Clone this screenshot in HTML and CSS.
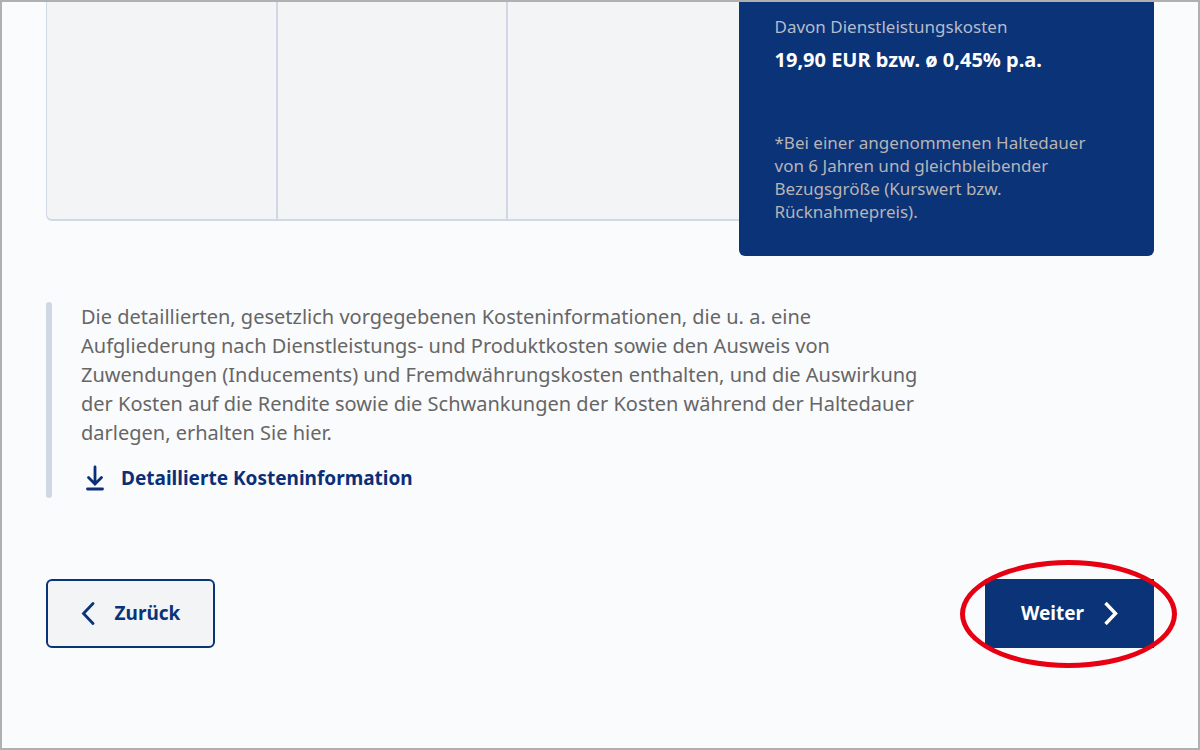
FILE: index.html
```html
<!DOCTYPE html>
<html lang="de">
    <head>
        <meta charset="utf-8">
        <title>Kosteninformation</title>
        <link rel="stylesheet" href="styles.css">
    </head>
    <body>
        <main class="page">
            <section class="costs">
                <div class="columns">
                    <div class="column"></div>
                    <div class="column"></div>
                    <div class="column"></div>
                </div>
                <div class="summary">
                    <p class="label">Davon Dienstleistungskosten</p>
                    <p class="value">19,90 EUR bzw. ø 0,45% p.a.</p>
                    <p class="note">*Bei einer angenommenen Haltedauer<br>von 6 Jahren und gleichbleibender<br>Bezugsgröße (Kurswert bzw.<br>Rücknahmepreis).</p>
                </div>
            </section>

            <section class="info">
                <p class="text">Die detaillierten, gesetzlich vorgegebenen Kosteninformationen, die u. a. eine<br>Aufgliederung nach Dienstleistungs- und Produktkosten sowie den Ausweis von<br>Zuwendungen (Inducements) und Fremdwährungskosten enthalten, und die Auswirkung<br>der Kosten auf die Rendite sowie die Schwankungen der Kosten während der Haltedauer<br>darlegen, erhalten Sie hier.</p>
                <a class="download" href="#">
                    <svg width="18" height="26" viewBox="0 0 18 26" fill="none" stroke="currentColor" stroke-linecap="round">
                        <path d="M9 2V19M2.5 12.5L9 19L15.5 12.5" stroke-width="2.8"/>
                        <path d="M1.5 24H16.5" stroke-width="2.8"/>
                    </svg>
                    Detaillierte Kosteninformation
                </a>
            </section>

            <nav class="actions">
                <button class="btn btn-back" type="button">
                    <svg width="14" height="24" viewBox="0 0 14 24" fill="none" stroke="currentColor" stroke-linecap="round">
                        <path d="M12 2.5L2.5 12.5L12 22.5" stroke-width="2.8"/>
                    </svg>
                    Zurück
                </button>
                <div class="next">
                    <button class="btn btn-next" type="button">
                        Weiter
                        <svg width="14" height="24" viewBox="0 0 14 24" fill="none" stroke="currentColor">
                            <path d="M1.5 2L11.5 12.5L1.5 23" stroke-width="3.4"/>
                        </svg>
                    </button>
                    <span class="marker"></span>
                </div>
            </nav>
        </main>
    </body>
</html>
```
FILE: styles.css
```css
*{
    box-sizing: border-box;
}
body{
    margin: 0;
    font-family: "Noto Sans", "Open Sans", sans-serif;
    color: #666;
    background: #fafbfd;
}
p{
    margin: 0;
}
.page{
    min-height: 100vh;
    padding: 0 44px 40px;
    border: 2px solid #b0b0b0;
}

.costs{
    display: grid;
    grid-template-columns: 5fr 3fr;
}
.columns{
    display: grid;
    grid-template-columns: repeat(3, 1fr);
    margin-bottom: 35px;
    background: #f3f4f6;
    border: 2px solid #cfd8e4;
    border-width: 0 0 2px 1px;
    border-radius: 0 0 0 6px;
}
.column{
    border-right: 2px solid #cfd8e4;
}
.column:last-child{
    border-right: none;
}
.summary{
    padding: 12px 36px 33px;
    color: #b5bccb;
    background: #0a3378;
    border-radius: 0 0 6px 6px;
}
.label{
    font-size: 17px;
    line-height: 26px;
}
.value{
    margin-top: 4px;
    font-size: 20px;
    line-height: 32px;
    font-weight: 700;
    color: #fff;
}
.note{
    margin-top: 55px;
    font-size: 17px;
    line-height: 23px;
    color: #b8b4b4;
}

.info{
    position: relative;
    margin-top: 46px;
    padding: 0 0 2px 35px;
}
.info:before{
    content: '';
    position: absolute;
    top: 0;
    bottom: 0;
    left: 0;
    width: 6px;
    border-radius: 3px;
    background: #cfd8e4;
}
.text{
    font-size: 20px;
    line-height: 29px;
}
.download{
    display: inline-flex;
    align-items: center;
    gap: 17px;
    margin-top: 15px;
    padding-left: 5px;
    font-size: 19px;
    line-height: 32px;
    font-weight: 700;
    color: #0a2f78;
    text-decoration: none;
}

.actions{
    display: flex;
    justify-content: space-between;
    margin-top: 81px;
}
.btn{
    display: flex;
    align-items: center;
    justify-content: center;
    gap: 20px;
    min-width: 169px;
    height: 69px;
    padding: 0 32px 2px;
    font-family: inherit;
    font-size: 19px;
    line-height: 28px;
    font-weight: 700;
    border: 2px solid #0a3378;
    border-radius: 6px;
    cursor: pointer;
}
.btn-back{
    color: #0a3378;
    background: #f3f4f6;
}
.btn-next{
    color: #fff;
    background: #0a3378;
    border-radius: 0;
}
.next{
    position: relative;
}
/* rote Ellipse um den Weiter-Button */
.marker{
    position: absolute;
    top: -19px;
    bottom: -20px;
    left: -25px;
    right: -23px;
    border: 5px solid #e60012;
    border-radius: 50%;
    pointer-events: none;
}
```
